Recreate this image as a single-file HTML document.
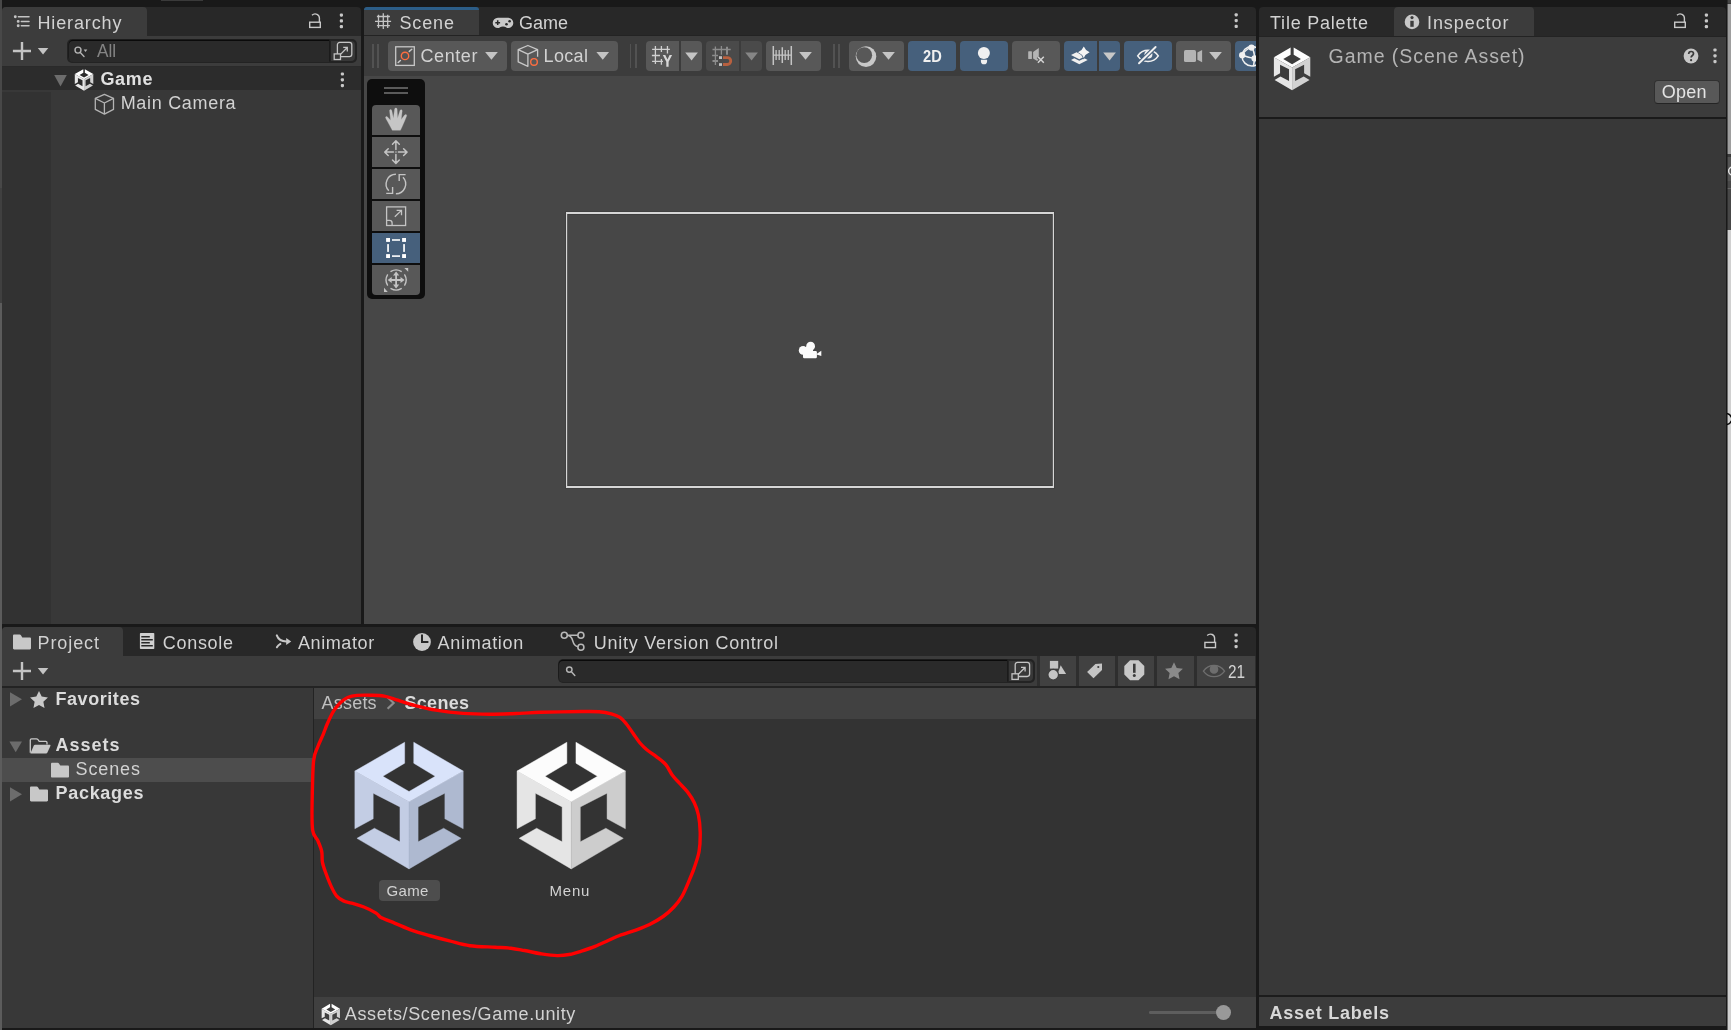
<!DOCTYPE html>
<html><head><meta charset="utf-8"><title>Unity Editor</title>
<style>
html,body{margin:0;padding:0;}
body{width:1731px;height:1030px;overflow:hidden;background:#191919;position:relative;font-family:"Liberation Sans",sans-serif;}
#root{position:absolute;left:0;top:0;width:1731px;height:1030px;overflow:hidden;background:#191919;}
#root div{position:absolute;}
#root span{position:absolute;white-space:pre;}
#root svg{position:absolute;left:0;top:0;}
</style></head><body>
<div id="root">
<div style="left:0px;top:0px;width:2px;height:188px;background:#484848;"></div>
<div style="left:0px;top:188px;width:2px;height:115px;background:#404040;"></div>
<div style="left:0px;top:303px;width:2px;height:727px;background:#5c5c5c;"></div>
<div style="left:161px;top:0px;width:42px;height:1px;background:#3a3a3a;"></div>
<div style="left:1727px;top:0px;width:4px;height:3px;background:#464646;"></div>
<div style="left:1727px;top:3px;width:4px;height:1px;background:#383838;"></div>
<div style="left:1727px;top:4px;width:4px;height:150px;background:#9e9e9e;"></div>
<div style="left:1727px;top:154px;width:4px;height:3px;background:#3a3a3a;"></div>
<div style="left:1727px;top:157px;width:4px;height:24px;background:#555555;"></div>
<div style="left:1727px;top:181px;width:4px;height:49px;background:#484848;"></div>
<div style="left:1727px;top:188px;width:4px;height:1px;background:#666;"></div>
<div style="left:1727px;top:230px;width:4px;height:800px;background:#d0d0d0;"></div>
<div style="left:1727px;top:0px;width:1px;height:1030px;background:rgba(25,25,25,0.55);"></div>
<div style="left:2px;top:7px;width:358.5px;height:29px;background:#282828;border-radius:4px 4px 0 0;"></div>
<div style="left:2px;top:7px;width:145px;height:29px;background:#3c3c3c;border-radius:4px 4px 0 0;"></div>
<div style="left:2px;top:36px;width:358.5px;height:30px;background:#3c3c3c;"></div>
<div style="left:2px;top:66px;width:358.5px;height:1px;background:#2a2a2a;"></div>
<div style="left:2px;top:67px;width:358.5px;height:23px;background:#2c2c2c;"></div>
<div style="left:2px;top:90px;width:358.5px;height:533.6px;background:#383838;"></div>
<div style="left:2px;top:91.5px;width:49px;height:532.1px;background:#323232;"></div>
<div style="left:67.3px;top:39.3px;width:289.3px;height:23.4px;background:#232323;border-radius:5px;"></div>
<div style="left:68.5px;top:40.8px;width:260.5px;height:20.8px;background:#2a2a2a;border-radius:4px 0 0 4px;box-shadow:0 -1px 0 0.3px #0a0a0a;"></div>
<div style="left:330.6px;top:40.6px;width:24.6px;height:20.9px;background:#383838;border-radius:0 4px 4px 0;"></div>
<div style="left:364px;top:7px;width:891.5px;height:28px;background:#282828;border-radius:4px 4px 0 0;"></div>
<div style="left:364px;top:7px;width:115px;height:28px;background:#3c3c3c;border-radius:4px 4px 0 0;"></div>
<div style="left:364px;top:7px;width:115px;height:2.7px;background:#2c5d87;border-radius:4px 4px 0 0;"></div>
<div style="left:364px;top:35px;width:891.5px;height:1px;background:#232323;"></div>
<div style="left:364px;top:36px;width:891.5px;height:39.5px;background:#3c3c3c;"></div>
<div style="left:364px;top:75.5px;width:891.5px;height:548.1px;background:#474747;"></div>
<div style="left:388px;top:41px;width:119px;height:30px;background:#585858;border-radius:4px;"></div>
<div style="left:511px;top:41px;width:107px;height:30px;background:#585858;border-radius:4px;"></div>
<div style="left:646px;top:41px;width:33px;height:30px;background:#585858;border-radius:4px 0 0 4px;"></div>
<div style="left:681px;top:41px;width:21px;height:30px;background:#585858;border-radius:0 4px 4px 0;"></div>
<div style="left:706px;top:41px;width:33px;height:30px;background:#4a4a4a;border-radius:4px 0 0 4px;"></div>
<div style="left:741px;top:41px;width:21px;height:30px;background:#4a4a4a;border-radius:0 4px 4px 0;"></div>
<div style="left:766px;top:41px;width:55px;height:30px;background:#585858;border-radius:4px;"></div>
<div style="left:849px;top:41px;width:55px;height:30px;background:#585858;border-radius:4px;"></div>
<div style="left:908px;top:41px;width:48px;height:30px;background:#46607c;border-radius:4px;"></div>
<div style="left:960px;top:41px;width:48px;height:30px;background:#46607c;border-radius:4px;"></div>
<div style="left:1012px;top:41px;width:48px;height:30px;background:#585858;border-radius:4px;"></div>
<div style="left:1064px;top:41px;width:33px;height:30px;background:#46607c;border-radius:4px 0 0 4px;"></div>
<div style="left:1099px;top:41px;width:21px;height:30px;background:#46607c;border-radius:0 4px 4px 0;"></div>
<div style="left:1124px;top:41px;width:48px;height:30px;background:#46607c;border-radius:4px;"></div>
<div style="left:1176px;top:41px;width:55px;height:30px;background:#585858;border-radius:4px;"></div>
<div style="left:1235px;top:41px;width:20.5px;height:30px;background:#46607c;border-radius:4px 0 0 4px;"></div>
<div style="left:372.3px;top:44px;width:1.6px;height:24px;background:#525252;"></div>
<div style="left:377.3px;top:44px;width:1.6px;height:24px;background:#525252;"></div>
<div style="left:629.8px;top:44px;width:1.6px;height:24px;background:#525252;"></div>
<div style="left:635.2px;top:44px;width:1.6px;height:24px;background:#525252;"></div>
<div style="left:833px;top:44px;width:1.6px;height:24px;background:#525252;"></div>
<div style="left:838.3px;top:44px;width:1.6px;height:24px;background:#525252;"></div>
<div style="left:367px;top:79px;width:58px;height:220px;background:#0e0e0e;border-radius:5px;"></div>
<div style="left:384px;top:87.2px;width:24.2px;height:1.8px;background:#5a5a5a;"></div>
<div style="left:384px;top:91.9px;width:24.2px;height:1.8px;background:#5a5a5a;"></div>
<div style="left:372px;top:105px;width:48px;height:30px;background:#585858;border-radius:4px 4px 0 0;"></div>
<div style="left:372px;top:137px;width:48px;height:30px;background:#585858;border-radius:0;"></div>
<div style="left:372px;top:169px;width:48px;height:30px;background:#585858;border-radius:0;"></div>
<div style="left:372px;top:201px;width:48px;height:30px;background:#585858;border-radius:0;"></div>
<div style="left:372px;top:233px;width:48px;height:30px;background:#46607c;border-radius:0;"></div>
<div style="left:372px;top:265px;width:48px;height:30px;background:#585858;border-radius:0 0 4px 4px;"></div>
<div style="left:1258.5px;top:7px;width:467.5px;height:29px;background:#282828;border-radius:4px 4px 0 0;"></div>
<div style="left:1394px;top:7px;width:140px;height:29px;background:#3c3c3c;border-radius:4px 4px 0 0;"></div>
<div style="left:1258.5px;top:36px;width:467.5px;height:1px;background:#232323;"></div>
<div style="left:1258.5px;top:37px;width:467.5px;height:80px;background:#3c3c3c;"></div>
<div style="left:1258.5px;top:117px;width:467.5px;height:2px;background:#1a1a1a;"></div>
<div style="left:1258.5px;top:119px;width:467.5px;height:876px;background:#383838;"></div>
<div style="left:1258.5px;top:995px;width:467.5px;height:2px;background:#1c1c1c;"></div>
<div style="left:1258.5px;top:997px;width:467.5px;height:29px;background:#3c3c3c;"></div>
<div style="left:1653.5px;top:79.5px;width:66.0px;height:24.0px;background:#585858;border-radius:4px;box-sizing:border-box;border:1px solid #303030;border-bottom-color:#242424;"></div>
<div style="left:2px;top:627px;width:1253.5px;height:29px;background:#282828;border-radius:4px 4px 0 0;"></div>
<div style="left:2px;top:627px;width:121px;height:29px;background:#3c3c3c;border-radius:4px 4px 0 0;"></div>
<div style="left:2px;top:656px;width:1253.5px;height:30px;background:#3c3c3c;"></div>
<div style="left:2px;top:686px;width:1253.5px;height:1.5px;background:#232323;"></div>
<div style="left:2px;top:687.5px;width:310.6px;height:340.1px;background:#383838;"></div>
<div style="left:312.6px;top:687.5px;width:1.4px;height:340.1px;background:#232323;"></div>
<div style="left:314px;top:687.5px;width:941.5px;height:31.3px;background:#414141;"></div>
<div style="left:314px;top:718.8px;width:941.5px;height:278.0px;background:#333333;"></div>
<div style="left:314px;top:996.8px;width:941.5px;height:30.8px;background:#404040;"></div>
<div style="left:2px;top:757.8px;width:310.6px;height:24.0px;background:#4d4d4d;"></div>
<div style="left:557.8px;top:659.3px;width:477.0px;height:23.4px;background:#232323;border-radius:5px;"></div>
<div style="left:559px;top:660.8px;width:448.4px;height:20.8px;background:#2a2a2a;border-radius:4px 0 0 4px;box-shadow:0 -1px 0 0.3px #0a0a0a;"></div>
<div style="left:1009px;top:660.6px;width:24.4px;height:20.9px;background:#383838;border-radius:0 4px 4px 0;"></div>
<div style="left:1037px;top:656px;width:218.5px;height:30px;background:#2e2e2e;"></div>
<div style="left:1040px;top:656px;width:36px;height:30px;background:#414141;"></div>
<div style="left:1079.2px;top:656px;width:35.8px;height:30px;background:#414141;"></div>
<div style="left:1118.2px;top:656px;width:35.8px;height:30px;background:#414141;"></div>
<div style="left:1157.3px;top:656px;width:36.7px;height:30px;background:#414141;"></div>
<div style="left:1196.6px;top:656px;width:58.9px;height:30px;background:#414141;"></div>
<div style="left:379.2px;top:880.2px;width:60.8px;height:20.8px;background:#4d4d4d;border-radius:4px;"></div>
<div style="left:1149px;top:1011.3px;width:69px;height:2.6px;background:#5e5e5e;border-radius:1.3px;"></div>
<div style="left:1215.8px;top:1005px;width:15.2px;height:15.2px;background:#999999;border-radius:50%;"></div>
<svg width="1731" height="1030" viewBox="0 0 1731 1030">
<rect x="565.5" y="211.5" width="489" height="277" fill="none" stroke="#404040" stroke-width="1"/>
<rect x="567.5" y="214.5" width="485" height="271" fill="none" stroke="#3e3e3e" stroke-width="1"/>
<path d="M566 212H1054V488H566Z M567.2 214.1V485.9H1052.8V214.1Z" fill="#d6d6d6" fill-rule="evenodd"/>
<defs>
<g id="cubeT"><path d="M85 235L370 70V190L245 265L395 352L545 265L422 190V70L705 235L395 410Z"/></g>
<g id="cubeL"><path d="M85 235L395 410V795L97 620L197 562L343 640V440L190 362V508L85 565Z"/></g>
<g id="cubeR"><path d="M705 235L395 410V795L693 620L593 562L447 640V440L600 362V508L705 565Z"/></g>
</defs>
<g transform="translate(340 730) scale(0.17476)">
<use href="#cubeL" fill="#c3cde4" stroke="#c3cde4" stroke-width="2.5"/><use href="#cubeR" fill="#aeb9d0" stroke="#aeb9d0" stroke-width="2.5"/><use href="#cubeT" fill="#d9e3fa" stroke="#d9e3fa" stroke-width="2.5"/>
</g>
<g transform="translate(502.2 730) scale(0.17476)">
<use href="#cubeL" fill="#e5e5e5" stroke="#e5e5e5" stroke-width="2.5"/><use href="#cubeR" fill="#cdcdcd" stroke="#cdcdcd" stroke-width="2.5"/><use href="#cubeT" fill="#fcfcfc" stroke="#fcfcfc" stroke-width="2.5"/>
</g>

<!-- hierarchy tab icon -->
<g fill="#c4c4c4" stroke="#c4c4c4" stroke-width="1.5" stroke-linecap="round">
<circle cx="15.3" cy="16.7" r="0.7"/><path d="M18.4 16.7H29"/>
<circle cx="18.2" cy="21.4" r="0.7"/><path d="M21.3 21.4H29"/>
<circle cx="18.2" cy="25.7" r="0.7"/><path d="M21.3 25.7H29"/>
</g>
<!-- lock + kebab (reusable) -->
<defs>
<g id="lock" fill="none" stroke="#c8c8c8" stroke-width="1.4"><rect x="0.7" y="8.8" width="10.6" height="5.2"/><path d="M3 1.8C4.5 0.4 6.3 0.2 8 0.9C9.6 1.6 10.4 2.8 10.4 4.6V8.8"/></g>
<g id="kebab" fill="#c8c8c8"><rect x="-1.6" y="-1.6" width="3.2" height="3.2" rx="1.1"/><rect x="-1.6" y="4.2" width="3.2" height="3.2" rx="1.1"/><rect x="-1.6" y="10" width="3.2" height="3.2" rx="1.1"/></g>
<path id="dd" d="M0 0H12.7L6.35 7.8Z"/>
<g id="popout" fill="none" stroke="#c4c4c4" stroke-width="1.3"><rect x="3.2" y="0" width="14.4" height="14.2" rx="2.4"/><rect x="0" y="11.5" width="6.3" height="5.6" fill="#383838"/><path d="M6.3 12L12.8 5.4M9 5H13.1V9.2"/></g>
</defs>
<use href="#lock" x="309" y="13.4"/>
<use href="#kebab" x="341.4" y="15.1"/>
<use href="#kebab" x="342.4" y="74"/>
<!-- plus / dropdown -->
<path d="M12.9 51H31M22 42V60" stroke="#c4c4c4" stroke-width="2.4" fill="none"/>
<path d="M37.8 48H48.3L43.05 54.5Z" fill="#c4c4c4"/>
<!-- search icon -->
<g fill="none" stroke="#b4b4b4" stroke-width="1.4" stroke-linecap="round"><circle cx="78" cy="50.1" r="3"/><path d="M80.3 52.6L84 56.4"/></g>
<path d="M83.7 49.6H87.3L85.5 52Z" fill="#b4b4b4"/>
<use href="#popout" x="334.2" y="42.4"/>
<!-- foldout -->
<path d="M54.2 75H66.8L60.5 86.4Z" fill="#6c6c6c"/>
<!-- small unity cube in hierarchy -->
<g transform="translate(72.26 67.1) scale(0.02984)"><use href="#cubeT" fill="#ffffff"/><use href="#cubeL" fill="#e8e8e8"/><use href="#cubeR" fill="#d0d0d0"/></g>
<!-- gameobject cube -->
<g fill="none" stroke="#b4b4b4" stroke-width="1.3" stroke-linejoin="round"><path d="M104.4 94.3L113.5 98.3V109.4L104.4 114.1L95.3 109.4V98.3Z"/><path d="M95.3 98.3L104.4 103L113.5 98.3M104.4 103V114.1"/></g>

<!-- Scene tab grid icon -->
<g fill="none" stroke="#c4c4c4" stroke-width="1.3">
<path d="M378.5 14.8V27.9M383.3 13.2V29M387.7 14.8V27.9M376.9 16.5H389.9M375 21.3H391.1M376.9 25.7H389.9"/>
</g>
<!-- Game tab gamepad -->
<path d="M497.9 17.7H508.1A5.2 5.2 0 0 1 508.1 28.1C506.6 28.1 505.6 26.4 503 26.4C500.4 26.4 499.4 28.1 497.9 28.1A5.2 5.2 0 0 1 497.9 17.7Z" fill="#c8c8c8"/>
<path d="M495.3 22.7H500.1M497.7 20.3V25.1" stroke="#282828" stroke-width="1.5" fill="none"/>
<circle cx="509.6" cy="21.3" r="1.3" fill="#282828"/><circle cx="506.5" cy="24.3" r="1.3" fill="#282828"/>
<use href="#kebab" x="1236.2" y="14.8"/>
<!-- Center icon -->
<rect x="395.7" y="46.8" width="18.6" height="18.6" fill="#525252" stroke="#c8c8c8" stroke-width="1.3"/>
<circle cx="405" cy="55.9" r="3.7" fill="none" stroke="#ff6e40" stroke-width="1.4"/>
<path d="M398.2 62.5L400.4 60.5M409.3 51.4L411.8 49.3" stroke="#c8c8c8" stroke-width="1.5" stroke-linecap="round"/>
<use href="#dd" x="485.1" y="52" fill="#c4c4c4"/>
<!-- Local icon -->
<g fill="none" stroke="#c8c8c8" stroke-width="1.3" stroke-linejoin="round"><path d="M537.6 56.8V49.7L527.9 45.5L518.2 49.7V61.9L527.9 66.3V54.2L518.2 49.7M527.9 54.2L537.6 49.7"/></g>
<circle cx="534" cy="61.9" r="3.3" fill="#585858" stroke="#ff6e40" stroke-width="1.4"/>
<use href="#dd" x="596.4" y="52" fill="#c4c4c4"/>
<!-- Grid Y -->
<g fill="none" stroke="#d0d0d0" stroke-width="1.3"><path d="M655.4 46.1V63.9M661.4 45.9V52M661.4 59V64.7M667.45 46.1V53.6M652.1 49.4H669.9M651.9 55.5H660M652.1 61.45H663"/></g>
<path d="M662.8 55H665.3L667.45 59.6L669.6 55H672.1L668.6 61.8V66.7H666.3V61.8Z" fill="#d8d8d8"/>
<use href="#dd" x="685.2" y="52.6" fill="#c4c4c4"/>
<!-- Snap (disabled) -->
<g fill="none" stroke="#8c8c8c" stroke-width="1.3"><path d="M715.4 46.5V64.9M721.4 46.1V54.8M712.5 49.5H730.7M712.1 55.5H718"/><path d="M727 46.7V54.8M712.5 61H718" stroke-width="2"/></g>
<rect x="719" y="56.2" width="3" height="2.8" fill="#c0c0c0"/><rect x="719" y="63.2" width="3" height="2.7" fill="#c0c0c0"/>
<path d="M723 57.6H727.3A3.45 3.45 0 0 1 727.3 64.5H723" fill="none" stroke="#b8603f" stroke-width="2.8"/>
<use href="#dd" x="745.2" y="52.6" fill="#868686"/>
<!-- Ruler -->
<g fill="none" stroke="#c4c4c4" stroke-width="1.5"><path d="M773.3 45.9V64.9M791.3 45.9V64.9M782.3 47.3V63.1"/><path d="M776.1 50.1V60M779.2 50.1V60M785.2 50.1V60M788.3 50.1V60M773.3 55.2H791.3" stroke-width="1.3"/></g>
<use href="#dd" x="799.2" y="52" fill="#c4c4c4"/>
<!-- Shaded sphere -->
<circle cx="866" cy="56.6" r="10.3" fill="#c8c8c8"/><circle cx="864.2" cy="55.2" r="7.9" fill="#585858"/>
<use href="#dd" x="882.2" y="52" fill="#c4c4c4"/>
<!-- Light bulb -->
<circle cx="983.9" cy="53.1" r="6" fill="#f0f0f0"/>
<path d="M980.9 59.8H987.1V61.2A3.1 3.1 0 0 1 980.9 61.2Z" fill="#f0f0f0"/>
<!-- Audio mute -->
<rect x="1028.2" y="51.2" width="3.7" height="7.9" rx="0.6" fill="#b4b4b4"/>
<path d="M1033.1 51.9L1038.8 48V62L1033.1 58.5Z" fill="#b4b4b4"/>
<path d="M1037.9 56.7L1043.8 62.7M1043.8 56.7L1037.9 62.7" stroke="#585858" stroke-width="3.6" fill="none"/>
<path d="M1037.9 56.7L1043.8 62.7M1043.8 56.7L1037.9 62.7" stroke="#d4d4d4" stroke-width="1.5" fill="none"/>
<!-- Fx layers -->
<path d="M1071 59.9L1074.3 58.2L1079.3 60.7L1084.4 58.2L1087.700 59.900L1079.300 64.200Z" fill="#f0f0f0"/>
<path d="M1071 55.100L1077 52.100L1085 56.300L1079.300 59.200Z" fill="#f0f0f0"/>
<path d="M1083.800 46.400Q1085.500 50.500 1089.600 52.200Q1085.500 53.900 1083.800 58Q1082.100 53.900 1078 52.200Q1082.100 50.500 1083.800 46.400Z" fill="#f4f4f4" stroke="#46607c" stroke-width="1.200" paint-order="stroke"/>
<use href="#dd" x="1103.200" y="52.600" fill="#c8c8c8"/>
<!-- Eye slash -->
<clipPath id="eyc"><path d="M1137.700 55.900C1140.500 51.800 1144 50.300 1148 50.300C1152 50.300 1155.500 51.800 1158.300 55.900C1155.500 60 1152 61.500 1148 61.500C1144 61.500 1140.500 60 1137.700 55.900Z"/></clipPath>
<path d="M1137.700 55.900C1140.500 51.800 1144 50.300 1148 50.300C1152 50.300 1155.500 51.800 1158.300 55.900C1155.500 60 1152 61.500 1148 61.500C1144 61.500 1140.500 60 1137.700 55.900Z" fill="none" stroke="#f0f0f0" stroke-width="1.600"/>
<circle cx="1148.400" cy="54.600" r="4" fill="#f0f0f0" clip-path="url(#eyc)"/>
<path d="M1139.600 62.800L1155 47.600" stroke="#46607c" stroke-width="4.200"/>
<path d="M1139 63.300L1155.600 47" stroke="#f0f0f0" stroke-width="1.900" stroke-linecap="round"/>
<!-- Camera -->
<rect x="1184" y="50.1" width="12" height="12" rx="1.6" fill="#b4b4b4"/>
<path d="M1197.4 52.4L1202.1 50.1V62.2L1197.4 59.8Z" fill="#b4b4b4"/>
<use href="#dd" x="1209.2" y="52" fill="#c4c4c4"/>
<!-- Gizmo sphere (clipped by panel edge) -->
<clipPath id="gzc"><rect x="1235" y="41" width="21" height="30"/></clipPath>
<g clip-path="url(#gzc)" fill="none" stroke="#f0f0f0" stroke-width="1.5">
<circle cx="1251.8" cy="56.2" r="9.8"/>
<path d="M1242 55.2C1246 56.6 1250 57.8 1256 58.6M1251.5 47.4C1254.5 51 1255.5 56 1253.5 65.8M1242 55.2C1244.5 51 1247.5 48.6 1251.5 47.4"/>
<circle cx="1251.5" cy="47.6" r="2.4" fill="#f0f0f0"/><circle cx="1242.2" cy="55.2" r="2.4" fill="#f0f0f0"/><circle cx="1254.6" cy="58.4" r="2.4" fill="#f0f0f0"/>
</g>

<!-- Hand -->
<path d="M392.3 130.3L387.6 121.6C386.6 119.8 385.7 118.5 385.6 117.6C385.5 116.6 386.6 116.2 387.5 117L390.6 120.2L389.6 110.8C389.5 109.4 391.5 109.1 391.8 110.6L393.4 118.2L394.6 109.2C394.8 107.6 397 107.6 397.1 109.2L397.6 118.2L400 110.6C400.4 109.2 402.4 109.6 402.2 111.1L401.2 119.4L404.6 115C405.5 113.9 407.2 114.6 406.6 116.1C405.4 119.4 403.8 123 402 127L400.4 130.3Z" fill="#c6c6c6" stroke="#c6c6c6" stroke-width="0.3" stroke-linejoin="round"/>
<!-- Move -->
<g fill="none" stroke="#c4c4c4" stroke-width="1.5" stroke-linecap="round" stroke-linejoin="round">
<path d="M395.9 141V149.6M392.5 144.2L395.9 140.8L399.3 144.2"/>
<path d="M395.9 163.2V154.6M392.5 160L395.9 163.4L399.3 160"/>
<path d="M385 152.1H393.4M388.2 148.7L384.8 152.1L388.2 155.5"/>
<path d="M406.8 152.1H398.4M403.6 148.7L407 152.1L403.6 155.5"/>
</g>
<rect x="394.9" y="151.1" width="2" height="2" fill="#8a8a8a"/>
<!-- Rotate -->
<g fill="none" stroke="#c4c4c4" stroke-width="1.4">
<path d="M395.9 174.3A9.8 9.8 0 0 0 388.8 190.8"/>
<path d="M386.2 193.4H392.6V187"/>
<path d="M395.9 193.8A9.8 9.8 0 0 0 403 177.3"/>
<path d="M405.6 174.6H399.2V181"/>
</g>
<!-- Scale -->
<g fill="none" stroke="#c4c4c4" stroke-width="1.3">
<rect x="386.6" y="206.9" width="19" height="18.6"/>
<path d="M386.6 220.4H389.5A2.6 2.6 0 0 1 392.1 223V225.5"/>
<path d="M394.8 216.8L401.2 210.6M396.6 210.4H401.5V215.3"/>
</g>
<!-- Rect (active) -->
<g fill="#ffffff"><rect x="386.1" y="238" width="3.9" height="3.9"/><rect x="402.1" y="238" width="3.9" height="3.9"/><rect x="386.1" y="254.1" width="3.9" height="3.9"/><rect x="402.1" y="254.1" width="3.9" height="3.9"/>
<rect x="392" y="239.2" width="8" height="1.6"/><rect x="392" y="255.3" width="8" height="1.6"/><rect x="387.2" y="244.1" width="1.7" height="7.8"/><rect x="403.2" y="244.1" width="1.7" height="7.8"/></g>
<!-- Transform -->
<g fill="none" stroke="#c4c4c4" stroke-width="1.4" stroke-linecap="round">
<path d="M391 271.4A10 10 0 0 1 401.2 271.4M404.7 274.9A10 10 0 0 1 404.7 285.1M401.2 288.6A10 10 0 0 1 391 288.6M387.5 285.1A10 10 0 0 1 387.5 274.9"/>
<path d="M396.1 273.6V286.4M389.7 280H402.5" stroke-width="1.8"/>
</g>
<path d="M396.1 271.6L399.2 275.6H393Z M396.1 288.4L399.2 284.4H393Z M387.7 280L391.7 276.9V283.1Z M404.5 280L400.5 276.9V283.1Z" fill="#c4c4c4"/>
<path d="M404.3 267.9H408.2V271.8Z M384 292V287.8L387.8 292Z" fill="#c4c4c4"/>
<!-- scene camera gizmo -->
<g fill="#fbfbfb"><circle cx="810.6" cy="346.2" r="4.4"/><circle cx="803.1" cy="350.4" r="4.3"/><rect x="803" y="351" width="13.9" height="7.2" rx="1.2"/><path d="M816.5 353.9L821.3 350.8V356L816.5 354.6Z"/><rect x="805" y="347" width="8" height="6"/></g>

<!-- inspector tab info icon -->
<circle cx="1412" cy="21.9" r="7.3" fill="#c8c8c8"/>
<circle cx="1412" cy="17.6" r="1.6" fill="#3c3c3c"/><rect x="1410.3" y="20.8" width="3.4" height="6" fill="#3c3c3c"/>
<use href="#lock" x="1674" y="13.4"/>
<use href="#kebab" x="1706.4" y="15.1"/>
<!-- big unity icon -->
<g transform="translate(1268.9 43.5) scale(0.0587)"><use href="#cubeT" fill="#fdfdfd"/><use href="#cubeL" fill="#e6e6e6"/><use href="#cubeR" fill="#d2d2d2"/></g>
<!-- help + kebab -->
<circle cx="1691" cy="56" r="7.4" fill="#c8c8c8"/>
<path d="M1688.7 54.1C1688.7 52.3 1689.8 51.5 1691.1 51.5C1692.5 51.5 1693.5 52.4 1693.5 53.7C1693.5 55.5 1691.1 55.5 1691.1 57.6" fill="none" stroke="#3c3c3c" stroke-width="1.7"/>
<circle cx="1691.1" cy="60.2" r="1.1" fill="#3c3c3c"/>
<use href="#kebab" x="1715" y="50"/>

<defs>
<path id="folder" d="M0 1.2C0 0.5 0.5 0 1.2 0H6.6C7.3 0 7.7 0.3 8.1 0.9L9.3 2.8H16.8C17.5 2.8 18 3.3 18 4V13.6C18 14.3 17.5 14.8 16.8 14.8H1.2C0.5 14.8 0 14.3 0 13.6Z"/>
<path id="star" d="M0.00 -9.40L2.70 -3.72L8.94 -2.90L4.37 1.42L5.53 7.60L0.00 4.60L-5.53 7.60L-4.37 1.42L-8.94 -2.90L-2.70 -3.72Z"/>
</defs>
<!-- tabs -->
<use href="#folder" x="13" y="634.6" fill="#c8c8c8"/>
<rect x="139.9" y="633" width="14.4" height="16" rx="0.8" fill="#d0d0d0"/>
<path d="M141.3 636.7H149.8M141.3 639.7H152.8M141.3 642.8H149.8M141.3 645.8H152.8" stroke="#282828" stroke-width="1.5" fill="none"/>
<g fill="none" stroke="#c8c8c8" stroke-width="2" stroke-linecap="round"><path d="M276.8 635.4C278.3 639.6 281.2 641.5 286.4 641.5"/><path d="M280.4 643.9C278.7 644.9 277.6 646.1 276.9 647.3"/></g>
<path d="M286.2 638L291.2 641.5L286.2 645Z" fill="#c8c8c8"/>
<circle cx="422" cy="642" r="8.9" fill="#c8c8c8"/><path d="M422 634.4V642H428.4" fill="none" stroke="#282828" stroke-width="2"/>
<g fill="none" stroke="#b8b8b8" stroke-width="1.6"><circle cx="564.3" cy="635.2" r="3"/><circle cx="580.9" cy="635.2" r="3"/><circle cx="580.9" cy="647.2" r="3"/><path d="M567.3 635.2H577.9M567.6 635.4C575 635.8 570.5 645.8 578 646.8"/></g>
<use href="#lock" x="1204.2" y="633.6"/>
<use href="#kebab" x="1236.1" y="635"/>
<!-- toolbar -->
<path d="M12.9 671H31M22 662V680" stroke="#c4c4c4" stroke-width="2.4" fill="none"/>
<path d="M37.8 668H48.3L43.05 674.5Z" fill="#c4c4c4"/>
<g fill="none" stroke="#b4b4b4" stroke-width="1.5" stroke-linecap="round"><circle cx="569.3" cy="669.6" r="2.7"/><path d="M571.4 671.8L574.8 675.4"/></g>
<use href="#popout" x="1012" y="662.3"/>
<!-- filter icons -->
<rect x="1049.9" y="660.9" width="8.3" height="7.7" fill="#c4c4c4"/>
<path d="M1060.7 665.3L1066.1 673.9H1057.6Z" fill="#c4c4c4"/>
<circle cx="1053.2" cy="674.7" r="5.3" fill="#c4c4c4" stroke="#3c3c3c" stroke-width="1.2"/>
<path d="M1087.1 672L1095.4 664.1L1102 663.6V670.1L1093.5 678.2Z" fill="#c4c4c4"/><circle cx="1098.3" cy="667" r="1.1" fill="#3c3c3c"/>
<path d="M1130.1 660.2H1138.5L1144.3 666V674.4L1138.5 680.2H1130.1L1124.3 674.4V666Z" fill="#c8c8c8"/>
<path d="M1134.3 663.7V672.8" stroke="#3c3c3c" stroke-width="2.6"/><circle cx="1134.3" cy="675.4" r="1.5" fill="#3c3c3c"/>
<use href="#star" x="1174" y="671.6" fill="#8a8a8a"/>
<path d="M1203.4 671.1C1206.4 667 1210 665.5 1214 665.5C1218 665.5 1221.6 667 1224.6 671.1C1221.6 675.2 1218 676.7 1214 676.7C1210 676.7 1206.4 675.2 1203.4 671.1Z" fill="none" stroke="#6e6e6e" stroke-width="1.3"/>
<path d="M1209.7 669.5A4.3 4.3 0 0 0 1218.3 669.5C1218.3 668 1217.8 667 1217 666C1215 665.4 1213 665.4 1211 666C1210.200 667 1209.7 668 1209.7 669.5Z" fill="#6e6e6e"/>
<!-- tree -->
<path d="M10 692.2L22 699.3L10 706.4Z" fill="#6c6c6c"/>
<use href="#star" x="39" y="700.3" fill="#c8c8c8"/>
<path d="M9.4 741.6H22L15.7 752.2Z" fill="#6c6c6c"/>
<!-- open folder -->
<path d="M30.3 752.8V740C30.3 739.300 30.800 738.800 31.500 738.800H36.500C37.200 738.800 37.600 739.100 38 739.600L39.200 741.300H45.800C46.500 741.300 47 741.800 47 742.500V744.400" fill="none" stroke="#c8c8c8" stroke-width="1.300"/>
<path d="M30.400 753.400L33.800 745.600C34.100 745 34.500 744.700 35.200 744.700H49.600C50.400 744.700 50.700 745.300 50.400 746L47.300 752.700C47 753.200 46.700 753.400 46.100 753.400Z" fill="#c8c8c8"/>
<use href="#folder" x="51" y="762.8" fill="#c8c8c8" transform="translate(0 0)"/>
<path d="M10 787.200L22 794.300L10 801.400Z" fill="#6c6c6c"/>
<use href="#folder" x="30" y="786.600" fill="#c8c8c8"/>
<!-- breadcrumb arrow -->
<path d="M387.600 697.300L393.600 703L387.600 708.700" fill="none" stroke="#8c8c8c" stroke-width="2.200"/>
<!-- status bar small cube -->
<g transform="translate(319.150 1001.700) scale(0.029500)"><use href="#cubeT" fill="#ffffff"/><use href="#cubeL" fill="#e8e8e8"/><use href="#cubeR" fill="#d0d0d0"/></g>


</svg>
<div id="txt" style="left:0;top:0;width:1731px;height:1030px;will-change:transform;">
<span style="left:37.4px;top:13.76px;font-size:18px;line-height:18px;letter-spacing:0.872px;color:#d2d2d2;">Hierarchy</span>
<span style="left:96.6px;top:42.36px;font-size:18px;line-height:18px;transform:scaleX(0.9546);transform-origin:0 0;color:#848484;">All</span>
<span style="left:100.4px;top:69.76px;font-size:18px;line-height:18px;letter-spacing:0.691px;color:#e0e0e0;font-weight:bold;">Game</span>
<span style="left:120.7px;top:94.46px;font-size:18px;line-height:18px;letter-spacing:0.685px;color:#d2d2d2;">Main Camera</span>
<span style="left:399.4px;top:14.36px;font-size:18px;line-height:18px;letter-spacing:0.889px;color:#d2d2d2;">Scene</span>
<span style="left:518.9px;top:14.36px;font-size:18px;line-height:18px;letter-spacing:0.027px;color:#d2d2d2;">Game</span>
<span style="left:420.5px;top:47.46px;font-size:18px;line-height:18px;letter-spacing:0.574px;color:#d2d2d2;">Center</span>
<span style="left:543.5px;top:47.46px;font-size:18px;line-height:18px;letter-spacing:0.366px;color:#d2d2d2;">Local</span>
<span style="left:922.6px;top:48.96px;font-size:16px;line-height:16px;transform:scaleX(0.9143);transform-origin:0 0;color:#f0f0f0;font-weight:bold;">2D</span>
<span style="left:1270px;top:14.16px;font-size:18px;line-height:18px;letter-spacing:0.783px;color:#d2d2d2;">Tile Palette</span>
<span style="left:1427px;top:14.16px;font-size:18px;line-height:18px;letter-spacing:0.92px;color:#d2d2d2;">Inspector</span>
<span style="left:1328.6px;top:46.59px;font-size:19.5px;line-height:19.5px;letter-spacing:0.941px;color:#b4b4b4;">Game (Scene Asset)</span>
<span style="left:1661.8px;top:82.96px;font-size:18px;line-height:18px;letter-spacing:0.255px;color:#e4e4e4;">Open</span>
<span style="left:1269.6px;top:1004.16px;font-size:18px;line-height:18px;letter-spacing:0.758px;color:#d8d8d8;font-weight:bold;">Asset Labels</span>
<span style="left:37.5px;top:634.16px;font-size:18px;line-height:18px;letter-spacing:0.912px;color:#d2d2d2;">Project</span>
<span style="left:162.7px;top:634.36px;font-size:18px;line-height:18px;letter-spacing:0.726px;color:#d2d2d2;">Console</span>
<span style="left:297.9px;top:634.36px;font-size:18px;line-height:18px;letter-spacing:0.609px;color:#d2d2d2;">Animator</span>
<span style="left:437.6px;top:634.36px;font-size:18px;line-height:18px;letter-spacing:0.706px;color:#d2d2d2;">Animation</span>
<span style="left:593.7px;top:634.36px;font-size:18px;line-height:18px;letter-spacing:0.761px;color:#d2d2d2;">Unity Version Control</span>
<span style="left:1227.9px;top:662.96px;font-size:18px;line-height:18px;transform:scaleX(0.8540);transform-origin:0 0;color:#d2d2d2;">21</span>
<span style="left:55.5px;top:689.76px;font-size:18px;line-height:18px;letter-spacing:0.558px;color:#dcdcdc;font-weight:bold;">Favorites</span>
<span style="left:55.5px;top:736.16px;font-size:18px;line-height:18px;letter-spacing:0.991px;color:#dcdcdc;font-weight:bold;">Assets</span>
<span style="left:75.5px;top:760.16px;font-size:18px;line-height:18px;letter-spacing:0.891px;color:#d2d2d2;">Scenes</span>
<span style="left:55.5px;top:784.16px;font-size:18px;line-height:18px;letter-spacing:0.704px;color:#dcdcdc;font-weight:bold;">Packages</span>
<span style="left:321.5px;top:693.86px;font-size:18px;line-height:18px;letter-spacing:0.216px;color:#c0c0c0;">Assets</span>
<span style="left:404.5px;top:693.86px;font-size:18px;line-height:18px;letter-spacing:0.29px;color:#dcdcdc;font-weight:bold;">Scenes</span>
<span style="left:344.8px;top:1005.06px;font-size:18px;line-height:18px;letter-spacing:0.626px;color:#d2d2d2;">Assets/Scenes/Game.unity</span>
<span style="left:386.6px;top:882.9px;font-size:15px;line-height:15px;letter-spacing:0.316px;color:#d2d2d2;">Game</span>
<span style="left:549.6px;top:882.9px;font-size:15px;line-height:15px;letter-spacing:0.758px;color:#d2d2d2;">Menu</span>
</div>
<svg width="1731" height="1030" viewBox="0 0 1731 1030">
<path d="M312.6 830C311.7 823.0 312.0 810.2 312.2 798.7C312.4 787.2 312.7 769.3 313.6 760.7C314.5 752.1 316.1 751.3 317.7 747C319.3 742.7 321.4 738.6 323 734.8C324.6 731.0 325.4 728.1 327.2 724C329.0 719.9 331.7 714.0 334 710.4C336.3 706.8 338.5 704.4 340.8 702.2C343.1 700.1 344.9 698.6 347.6 697.5C350.3 696.4 353.1 695.8 357 695.4C360.9 695.0 366.2 695.1 370.7 695.2C375.2 695.3 379.7 695.3 384.2 696.1C388.7 696.9 392.6 698.6 397.8 700.2C403.0 701.8 409.1 704.0 415.5 705.6C421.9 707.2 428.0 708.8 435.9 710.1C443.8 711.4 453.9 712.7 463 713.4C472.1 714.1 480.7 714.2 490.2 714.2C499.7 714.2 511.6 713.7 520 713.4C528.4 713.1 530.5 712.6 540.8 712.3C551.0 712.0 571.8 711.6 581.5 711.5C591.2 711.4 594.2 711.3 599.2 711.7C604.2 712.1 608.0 712.9 611.4 713.8C614.8 714.7 617.1 715.5 619.6 717.2C622.1 718.9 624.1 721.3 626.4 724C628.7 726.7 630.9 730.3 633.2 733.5C635.5 736.7 637.7 740.3 640 743C642.3 745.7 644.1 747.5 646.8 749.8C649.5 752.1 653.1 754.1 656.3 756.6C659.5 759.1 663.1 761.5 665.8 764.7C668.5 767.9 670.3 772.5 672.6 775.6C674.9 778.7 676.9 780.4 679.4 783.1C681.9 785.8 685.0 788.6 687.5 791.9C690.0 795.2 692.5 798.9 694.3 802.8C696.1 806.6 697.4 810.1 698.4 815C699.4 819.9 700.1 826.0 700.2 832C700.3 838.0 700.1 845.4 699.1 851.3C698.1 857.2 696.0 862.6 694.3 867.6C692.6 872.6 690.9 876.4 688.9 881.1C686.9 885.9 684.6 891.8 682.1 896.1C679.6 900.4 677.1 903.6 673.9 907C670.7 910.4 667.2 913.6 663.1 916.5C659.0 919.4 654.0 922.3 649.5 924.6C645.0 926.9 640.9 928.3 635.9 930.1C630.9 931.9 624.1 933.8 619.6 935.5C615.1 937.2 612.8 938.5 608.7 940.3C604.6 942.1 599.6 944.6 595.1 946.4C590.6 948.2 585.6 949.8 581.5 951.1C577.4 952.4 574.8 953.5 570.7 954.3C566.6 955.0 562.1 955.7 557.1 955.6C552.1 955.5 546.2 954.6 540.8 953.8C535.4 952.9 529.5 951.4 524.5 950.5C519.5 949.6 515.8 948.8 510.9 948.2C506.0 947.7 501.8 947.6 495 947.2C488.2 946.8 477.5 946.8 469.9 945.7C462.3 944.7 456.3 942.6 449.5 940.9C442.7 939.2 435.5 937.3 429.1 935.5C422.8 933.7 417.1 932.1 411.4 930.1C405.7 928.1 400.1 925.3 395.1 923.3C390.1 921.2 384.7 919.5 381.5 917.8C378.3 916.1 379.0 914.9 376.1 913.1C373.2 911.3 368.0 908.6 363.9 907C359.8 905.4 355.0 904.2 351.6 903.2C348.2 902.2 346.0 902.1 343.5 900.9C341.0 899.7 338.7 898.5 336.7 896.1C334.7 893.7 333.1 890.5 331.3 886.6C329.5 882.8 327.3 877.1 325.8 873C324.3 868.9 323.1 865.7 322.4 862.1C321.7 858.5 322.5 854.9 321.7 851.3C320.9 847.7 319.2 843.9 317.7 840.4C316.2 836.9 313.5 837.0 312.6 830Z" fill="none" stroke="#ff0000" stroke-width="3.4" stroke-linejoin="round" stroke-linecap="round"/>

<!-- fragments of neighbouring window at right edge -->
<circle cx="1732.6" cy="171" r="4" fill="none" stroke="#e4e4e4" stroke-width="1.4"/>
<path d="M1727 413.600C1729 413.800 1730.500 415.200 1731.500 417.400M1727 424.600C1729 424.400 1730.500 423 1731.500 420.800" fill="none" stroke="#0c0c0c" stroke-width="1.500"/>


</svg>
</div>
</body></html>
